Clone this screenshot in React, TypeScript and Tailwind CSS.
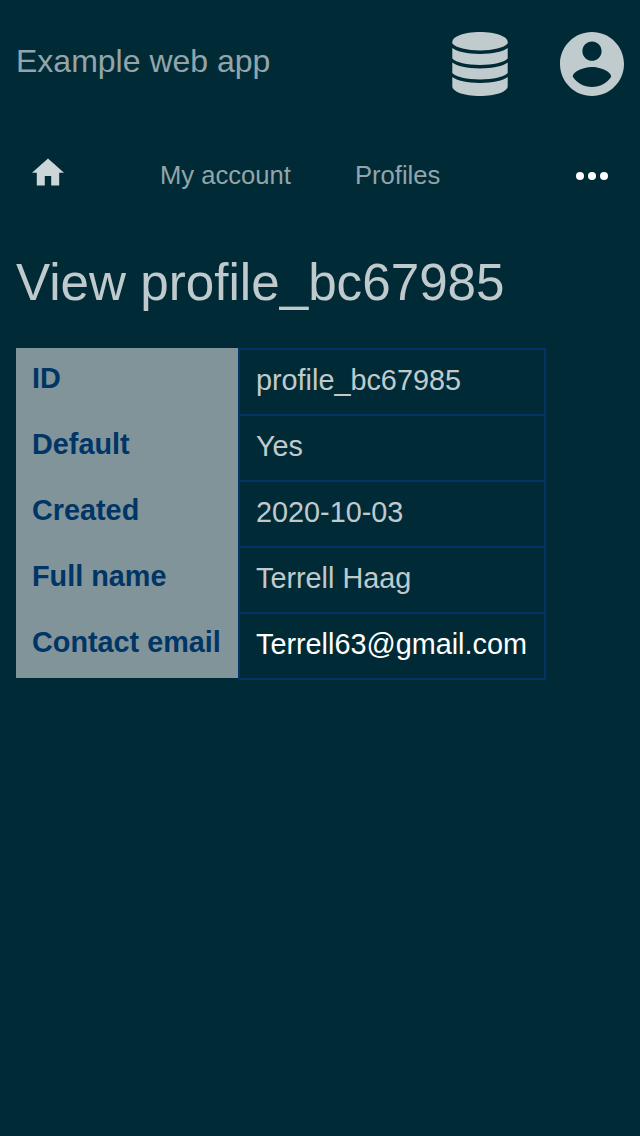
const rows = [
  ["ID", "profile_bc67985"],
  ["Default", "Yes"],
  ["Created", "2020-10-03"],
  ["Full name", "Terrell Haag"],
  ["Contact email", "Terrell63@gmail.com"],
];

function DatabaseIcon() {
  return (
    <svg className="size-16" viewBox="0 0 64 64" fill="currentColor">
      <path d="M4.3 10C4.3 4.5 16 0 32 0S59.7 4.5 59.7 10V11.5C56 15.8 45 18.4 32 18.4S8 15.8 4.3 11.5Z" />
      <path d="M4.3 16C9 19.8 19 21.9 32 21.9S55 19.8 59.7 16V26.5C56 30.5 45 32.9 32 32.9S8 30.5 4.3 26.5Z" />
      <path d="M4.3 30.5C9 34.3 19 36.4 32 36.4S55 34.3 59.7 30.5V41C56 45 45 47.4 32 47.4S8 45 4.3 41Z" />
      <path d="M4.3 45C9 48.8 19 50.9 32 50.9S55 48.8 59.7 45V54.2C59.7 59.5 48 64 32 64S4.3 59.5 4.3 54.2Z" />
    </svg>
  );
}

function AccountIcon() {
  return (
    <svg className="size-16" viewBox="2 2 20 20" fill="currentColor">
      <path d="M12 2C6.48 2 2 6.48 2 12s4.48 10 10 10 10-4.48 10-10S17.52 2 12 2zm0 3c1.66 0 3 1.34 3 3s-1.34 3-3 3-3-1.34-3-3 1.34-3 3-3zm0 14.2c-2.5 0-4.71-1.28-6-3.22.03-1.99 4-3.08 6-3.08 1.99 0 5.97 1.09 6 3.08-1.29 1.94-3.5 3.22-6 3.22z" />
    </svg>
  );
}

export default function App() {
  return (
    <div className="min-h-[1136px] bg-[#002b36] px-4 font-['Liberation_Sans',Arial,sans-serif] text-[#c0cacd]">
      <header className="flex h-32 items-center justify-between">
        <div className="pb-1.5 text-[32px] leading-[38px] text-[#93a5aa]">Example web app</div>
        <div className="flex gap-12 text-[#c0cbcd]">
          <DatabaseIcon />
          <AccountIcon />
        </div>
      </header>
      <nav className="flex h-24 items-center text-[25.6px] leading-8 text-[#93a5aa]">
        <div className="w-36 pb-2 pl-4">
          <svg className="h-7 w-8 text-[#ccd5d7]" viewBox="2 2.75 20 17.5" fill="currentColor">
            <path d="M10 20v-6h4v6h5v-8h3L12 3 2 12h3v8z" />
          </svg>
        </div>
        <a className="w-[195px] pb-0.5">My account</a>
        <a className="flex-1 pb-0.5">Profiles</a>
        <svg className="mr-4 h-2 w-8" viewBox="0 0 32 8" fill="white">
          <circle cx="4" cy="4" r="4" />
          <circle cx="16" cy="4" r="4" />
          <circle cx="28" cy="4" r="4" />
        </svg>
      </nav>
      <h1 className="mt-[29px] text-[51.2px] leading-[60px]">View profile_bc67985</h1>
      <div className="mt-[35px] grid w-[530px] grid-cols-[222px_308px] text-[28.8px] leading-8">
        <div className="mb-0.5 bg-[#80949a] pl-4 font-bold text-[#003566]">
          {rows.map(([label]) => (
            <div key={label} className="h-[66px] pt-[14px]">{label}</div>
          ))}
        </div>
        <div className="border-2 border-b-0 border-[#003566]">
          {rows.map(([label, value]) => (
            <div key={label} className={`h-[66px] border-b-2 border-[#003566] pt-[14px] pl-4 ${label === "Contact email" ? "text-white" : ""}`}>{value}</div>
          ))}
        </div>
      </div>
    </div>
  );
}
